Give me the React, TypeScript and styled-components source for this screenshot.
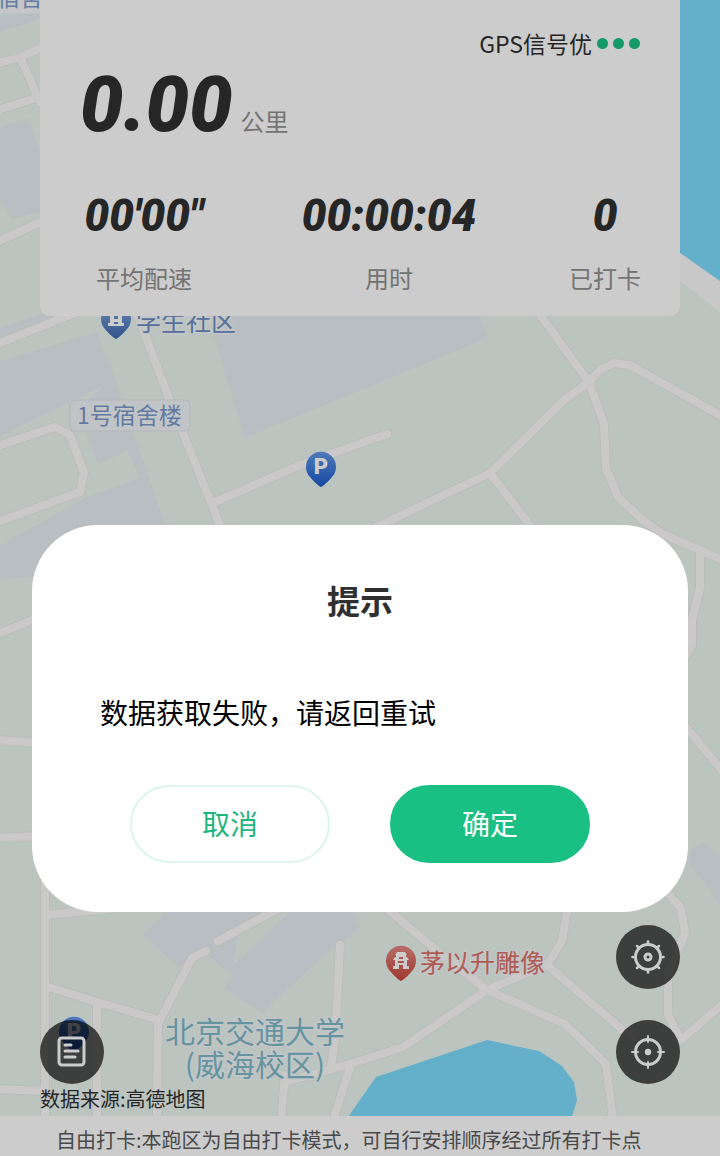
import React from "react";
import styled, { createGlobalStyle, css } from "styled-components";

const GlobalStyle = createGlobalStyle`
  *, *::before, *::after { box-sizing: border-box; }
  body {
    margin: 0;
    font-family: "Noto Sans CJK SC", sans-serif;
    color: #303030;
    background: #ebf6f1;
  }
  h2, p, dl, dt, dd { margin: 0; }
`;

const Screen = styled.main`
  position: relative;
  display: flex;
  flex-direction: column;
  min-height: 100vh;
  overflow: hidden;
`;

const MapCanvas = styled.svg`
  position: absolute;
  inset: 0;
  width: 100%;
  height: 100%;
`;

const StatsCard = styled.section`
  position: relative;
  display: flex;
  flex-direction: column;
  margin: 0 40px;
  padding: 26px 40px 20px;
  border-radius: 0 0 10px 10px;
  background: #ffffff;
`;

const Signal = styled.div`
  display: flex;
  align-items: center;
  justify-content: flex-end;
  gap: 5px;
  font-size: 23px;
  line-height: 34px;
`;

const SignalDot = styled.span`
  width: 11px;
  height: 11px;
  border-radius: 50%;
  background: #1ac083;
`;

const Distance = styled.div`
  display: flex;
  align-items: baseline;
  gap: 8px;
  height: 96px;
`;

const Figure = styled.span<{ $large?: boolean }>`
  font-family: Roboto, sans-serif;
  font-style: italic;
  font-weight: 900;
  font-size: ${(p) => (p.$large ? "77px" : "44px")};
  line-height: ${(p) => (p.$large ? "90px" : "52px")};
`;

const Caption = styled.span`
  font-size: 24px;
  line-height: 36px;
  color: #919191;
`;

const Stats = styled.dl`
  display: grid;
  grid-template-columns: 128px 1fr 70px;
  margin-top: 34px;
`;

const Stat = styled.div`
  display: flex;
  flex-direction: column-reverse;
  align-items: center;
  gap: 18px;
  white-space: nowrap;
`;

const Tools = styled.div`
  position: relative;
  display: flex;
  align-items: flex-end;
  justify-content: space-between;
  margin-top: auto;
  padding: 0 40px;
`;

const ToolStack = styled.div`
  display: flex;
  flex-direction: column;
  gap: 31px;
`;

const RoundButton = styled.button`
  display: grid;
  place-items: center;
  width: 64px;
  height: 64px;
  padding: 0;
  border: 0;
  border-radius: 50%;
  background: rgba(0, 0, 0, 0.68);
  color: #ffffff;
`;

const Attribution = styled.p`
  position: relative;
  padding: 0 40px;
  font-size: 20px;
  line-height: 30px;
  padding-bottom: 2px;
`;

const Notice = styled.footer`
  position: relative;
  min-height: 40px;
  padding: 8px 20px 0 56px;
  background: #ffffff;
  color: #5c5c5c;
  font-size: 20px;
  line-height: 32px;
  white-space: nowrap;
`;

const Scrim = styled.div`
  position: absolute;
  inset: 0;
  display: flex;
  flex-direction: column;
  justify-content: flex-end;
  padding: 0 32px 244px;
  background: rgba(0, 0, 0, 0.2);
`;

const Dialog = styled.section`
  padding: 50px 68px 49px;
  border-radius: 66px;
  background: #ffffff;
`;

const DialogTitle = styled.h2`
  font-size: 33px;
  line-height: 50px;
  text-align: center;
`;

const DialogMessage = styled.p`
  margin: 66px 0 52px;
  font-size: 28px;
  line-height: 42px;
  color: #000000;
`;

const DialogActions = styled.div`
  display: flex;
  justify-content: center;
  gap: 60px;
`;

const DialogButton = styled.button<{ $primary?: boolean }>`
  width: 200px;
  height: 78px;
  padding: 0 0 2px;
  border: 2px solid #d9f5ec;
  border-radius: 39px;
  background: #ffffff;
  color: #1fb580;
  font-family: inherit;
  font-size: 28px;
  line-height: 42px;
  ${(p) =>
    p.$primary &&
    css`
      border-color: #1ac083;
      background: #1ac083;
      color: #ffffff;
    `}
`;

const MapLabel = styled.text<{ $size: number }>`
  font-family: "Noto Sans CJK SC", sans-serif;
  font-size: ${(p) => p.$size}px;
  stroke: #f3f8f8;
  stroke-width: 3px;
  stroke-linejoin: round;
  paint-order: stroke;
`;

const PinLetter = styled.text`
  font-family: Roboto, sans-serif;
  font-size: 22px;
  font-weight: 900;
  text-anchor: middle;
  fill: #ffffff;
`;

const PIN_SHAPE =
  "M0 20C-1 20-8 14-11 10A15 15 0 1 1 11 10C8 14 1 20 0 20Z";

const ROADS = [
  "M-5 64L18 58L45 46",
  "M20 57L40 102",
  "M-5 111L45 95",
  "M-5 243L45 220",
  "M-5 345L60 319L95 305",
  "M138 316L167 393L222 530",
  "M-5 447L55 427L70 435L84 473L80 492L-5 523",
  "M215 502L300 465L387 434",
  "M535 308L589 382L604 424L606 468L618 497L645 522L665 535L725 561",
  "M589 382L600 370L614 363L630 365L725 418",
  "M589 382L564 400L490 473L370 530",
  "M490 473L535 532",
  "M700 553L700 588L692 620L692 645L680 665",
  "M680 720L725 774",
  "M-5 635L40 617",
  "M-5 740L40 743",
  "M-5 838L40 836",
  "M45 870V1120",
  "M45 915L110 909",
  "M45 986L97 1002L160 1020",
  "M97 1002V1120",
  "M158 1020L157 1120",
  "M160 1020L192 958L206 951",
  "M218 941L280 908",
  "M340 945L335 1040L331 1068",
  "M285 1075L281 1120",
  "M350 1068L333 1120",
  "M285 1082L360 1061L403 1047L487 990L547 965L562 941L568 905",
  "M385 907L430 945L487 990L565 1024L606 1064L613 1120",
  "M547 965L632 1038",
  "M660 885L681 908L685 933L668 973L668 1015L681 1040L725 1002",
  "M-5 1089L45 1091",
];

const BUILDINGS = [
  "0,16 40,13 40,19 0,32",
  "0,127 28,118 40,150 40,212 12,219 0,200",
  "0,328 40,314 60,316 0,340",
  "0,361 97,332 118,386 165,525 175,560 0,580 0,546 86,497 141,478 127,451 98,465 78,410 103,386 0,436",
  "210,325 235,316 480,316 487,338 245,438",
  "143,935 165,912 352,912 360,928 330,950 262,1013 225,988 232,976 204,952 178,967",
  "693,846 704,842 720,855 720,902 688,862",
  "710,890 720,890 720,905",
];

function Pin({
  x,
  y,
  fill,
  children,
}: {
  x: number;
  y: number;
  fill: string;
  children: React.ReactNode;
}) {
  return (
    <g transform={`translate(${x} ${y})`}>
      <path d={PIN_SHAPE} fill={fill} />
      {children}
    </g>
  );
}

function CampusMap() {
  return (
    <MapCanvas
      viewBox="0 0 720 1156"
      preserveAspectRatio="xMidYMin slice"
      role="img"
      aria-label="校园地图"
    >
      <defs>
        <linearGradient id="pinBlue" x1="0" y1="0" x2="0" y2="1">
          <stop offset="0" stopColor="#6498ea" />
          <stop offset="1" stopColor="#1a5ccb" />
        </linearGradient>
        <linearGradient id="pinSlate" x1="0" y1="0" x2="0" y2="1">
          <stop offset="0" stopColor="#86a9e2" />
          <stop offset="1" stopColor="#3b68ae" />
        </linearGradient>
        <linearGradient id="pinRed" x1="0" y1="0" x2="0" y2="1">
          <stop offset="0" stopColor="#e58a82" />
          <stop offset="1" stopColor="#c8453a" />
        </linearGradient>
      </defs>
      <rect width="720" height="1156" fill="#ebf6f1" />
      {BUILDINGS.map((points) => (
        <polygon key={points} points={points} fill="#e7eef2" />
      ))}
      <polygon points="240,928 262,914 290,912 232,966 236,950" fill="#ebf6f1" />
      <polygon points="676,248 720,278 720,312 676,278" fill="#fafafb" />
      <polygon points="676,0 720,0 720,281 676,250" fill="#7edbfc" />
      <polygon
        points="346,1120 376,1077 487,1040 539,1051 562,1066 574,1082 577,1100 571,1120"
        fill="#7edbfc"
      />
      <g fill="none" strokeLinejoin="round" strokeLinecap="round">
        {ROADS.map((d) => (
          <path key={d} d={d} stroke="#e6edea" strokeWidth="10" />
        ))}
        {ROADS.map((d) => (
          <path key={d} d={d} stroke="#fdfbfb" strokeWidth="8" />
        ))}
      </g>

      <rect x="-20" y="-20" width="72" height="33" rx="6" fill="#f5f8fb" />
      <MapLabel x="-3" y="6" $size={23} fill="#7f9ccd">
        宿舍
      </MapLabel>

      <rect
        x="70"
        y="400"
        width="120"
        height="31"
        rx="6"
        fill="#f2f6f9"
        stroke="#dfe6ea"
      />
      <MapLabel x="77" y="424" $size={23} fill="#7b99cc">
        1号宿舍楼
      </MapLabel>

      <Pin x={116} y={319} fill="url(#pinSlate)">
        <path
          d="M-8 7V4H-6V-9H6V4H8V7ZM-2-3V0H2V-3ZM-2 3V5H2V3Z"
          fill="#ffffff"
          fillRule="evenodd"
        />
      </Pin>
      <MapLabel x="136" y="331" $size={25} fill="#6c8cc4">
        学生社区
      </MapLabel>

      <Pin x={321} y={467} fill="url(#pinBlue)">
        <PinLetter y={7}>P</PinLetter>
      </Pin>
      <Pin x={74} y={1032} fill="url(#pinBlue)">
        <PinLetter y={7}>P</PinLetter>
      </Pin>

      <Pin x={401} y={961} fill="url(#pinRed)">
        <path
          d="M-4-9H4L6-6H5V-4H6L8-1H6V5H8V8H2V4H-2V8H-8V5H-6V-1H-8L-6-4H-5V-6H-6ZM-2-4V-2H2V-4ZM-3 0V2H3V0Z"
          fill="#ffffff"
          fillRule="evenodd"
        />
      </Pin>
      <MapLabel x="420" y="972" $size={25} fill="#dc7269">
        茅以升雕像
      </MapLabel>

      <MapLabel $size={30} fill="#80b9c8" textAnchor="middle">
        <tspan x="255" y="1043">
          北京交通大学
        </tspan>
        <tspan x="255" y="1076">
          (威海校区)
        </tspan>
      </MapLabel>
    </MapCanvas>
  );
}

function RecordIcon() {
  return (
    <svg width="30" height="32" viewBox="0 0 30 32" fill="none" stroke="currentColor">
      <rect x="2" y="2" width="25" height="27" rx="3" strokeWidth="3" />
      <path
        d="M8 9H14M8 15H21M8 21H18"
        strokeWidth="3"
        strokeLinecap="round"
      />
    </svg>
  );
}

function DialIcon() {
  return (
    <svg width="36" height="36" viewBox="-18 -18 36 36" fill="none" stroke="currentColor">
      <circle r="12.5" strokeWidth="3" />
      <circle r="3" strokeWidth="3" />
      {[0, 45, 90, 135, 180, 225, 270, 315].map((angle) => (
        <path
          key={angle}
          d="M0-13V-15.5"
          strokeWidth="2.6"
          strokeLinecap="round"
          transform={`rotate(${angle})`}
        />
      ))}
    </svg>
  );
}

function LocateIcon() {
  return (
    <svg width="36" height="36" viewBox="-18 -18 36 36" fill="none" stroke="currentColor">
      <circle r="12.5" strokeWidth="3" />
      <circle r="3.2" fill="currentColor" stroke="none" />
      {[0, 90, 180, 270].map((angle) => (
        <path
          key={angle}
          d="M0-10V-16"
          strokeWidth="2"
          strokeLinecap="round"
          transform={`rotate(${angle})`}
        />
      ))}
    </svg>
  );
}

const STATS = [
  { label: "平均配速", value: "00'00\"" },
  { label: "用时", value: "00:00:04" },
  { label: "已打卡", value: "0" },
];

export default function App() {
  return (
    <>
      <GlobalStyle />
      <Screen>
        <CampusMap />

        <StatsCard>
          <Signal>
            GPS信号优
            <SignalDot />
            <SignalDot />
            <SignalDot />
          </Signal>
          <Distance>
            <Figure $large>0.00</Figure>
            <Caption>公里</Caption>
          </Distance>
          <Stats>
            {STATS.map((stat) => (
              <Stat key={stat.label}>
                <Caption as="dt">{stat.label}</Caption>
                <Figure as="dd">{stat.value}</Figure>
              </Stat>
            ))}
          </Stats>
        </StatsCard>

        <Tools>
          <RoundButton type="button" aria-label="跑步记录">
            <RecordIcon />
          </RoundButton>
          <ToolStack>
            <RoundButton type="button" aria-label="设置">
              <DialIcon />
            </RoundButton>
            <RoundButton type="button" aria-label="定位">
              <LocateIcon />
            </RoundButton>
          </ToolStack>
        </Tools>
        <Attribution>数据来源:高德地图</Attribution>
        <Notice>自由打卡:本跑区为自由打卡模式，可自行安排顺序经过所有打卡点</Notice>

        <Scrim>
          <Dialog role="alertdialog" aria-labelledby="dialog-title" aria-describedby="dialog-message">
            <DialogTitle id="dialog-title">提示</DialogTitle>
            <DialogMessage id="dialog-message">数据获取失败，请返回重试</DialogMessage>
            <DialogActions>
              <DialogButton type="button">取消</DialogButton>
              <DialogButton type="button" $primary>
                确定
              </DialogButton>
            </DialogActions>
          </Dialog>
        </Scrim>
      </Screen>
    </>
  );
}
